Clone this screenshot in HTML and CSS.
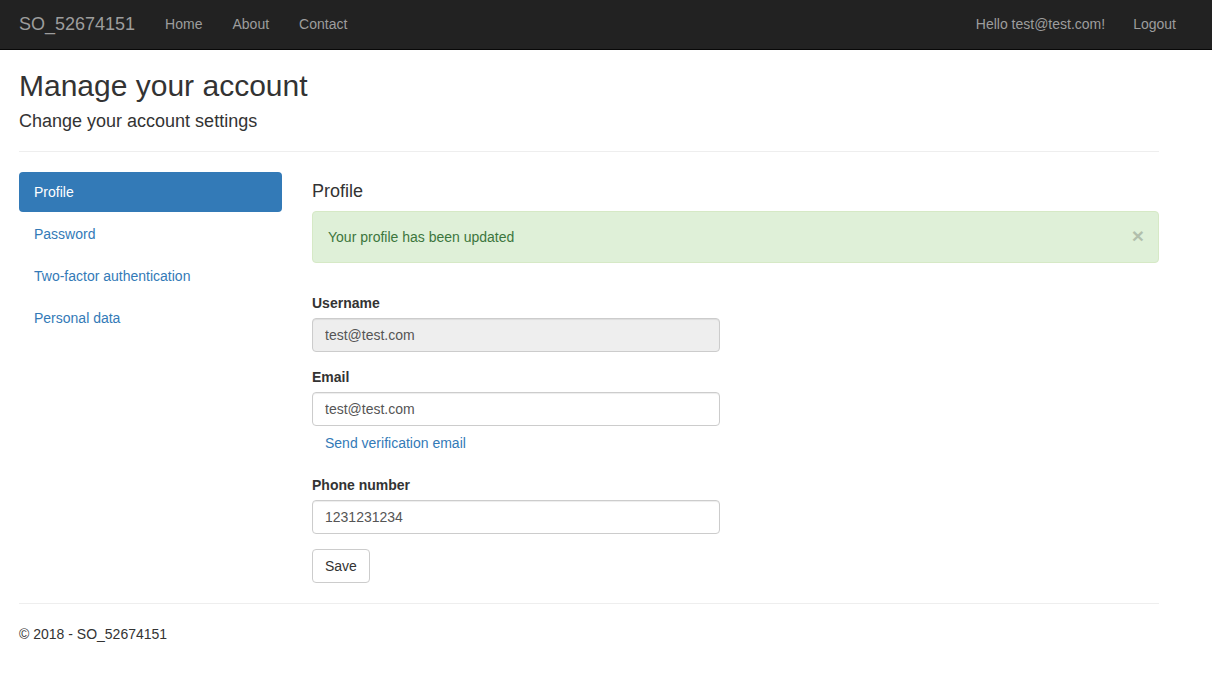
FILE: index.html
```html
<!DOCTYPE html>
<html>
<head>
<meta charset="utf-8">
<title>Profile - SO_52674151</title>
<link rel="stylesheet" href="styles.css">
</head>
<body>
<nav class="navbar">
  <div class="navbar-inner">
    <a class="brand" href="#">SO_52674151</a>
    <ul class="nav-links">
      <li><a href="#">Home</a></li>
      <li><a href="#">About</a></li>
      <li><a href="#">Contact</a></li>
    </ul>
    <div class="nav-right">
      <a class="nav-hello" href="#">Hello test@test.com!</a>
      <button class="nav-logout" type="button">Logout</button>
    </div>
  </div>
</nav>
<div class="container">
  <h2 class="title">Manage your account</h2>
  <h4 class="subtitle">Change your account settings</h4>
  <hr class="rule">
  <div class="row">
    <div class="side">
      <ul class="pills">
        <li class="active"><a href="#">Profile</a></li>
        <li><a href="#">Password</a></li>
        <li><a href="#">Two-factor authentication</a></li>
        <li><a href="#">Personal data</a></li>
      </ul>
    </div>
    <div class="main">
      <h4 class="section-title">Profile</h4>
      <div class="alert">
        <span class="close">&times;</span>
        Your profile has been updated
      </div>
      <form class="form">
        <div class="form-group">
          <label class="label">Username</label>
          <input class="input" type="text" value="test@test.com" disabled>
        </div>
        <div class="form-group">
          <label class="label">Email</label>
          <input class="input" type="text" value="test@test.com">
          <button type="button" class="btn-link">Send verification email</button>
        </div>
        <div class="form-group">
          <label class="label">Phone number</label>
          <input class="input" type="text" value="1231231234">
        </div>
        <button type="button" class="btn">Save</button>
      </form>
    </div>
  </div>
  <hr class="rule footer-rule">
  <footer class="footer">
    <p>&copy; 2018 - SO_52674151</p>
  </footer>
</div>
</body>
</html>
```
FILE: styles.css
```css
* { box-sizing: border-box; }
html, body { margin: 0; padding: 0; }
body {
  font-family: "Liberation Sans", Arial, Helvetica, sans-serif;
  font-size: 14px;
  line-height: 1.42857143;
  color: #333;
  background: #fff;
}
a { color: #337ab7; text-decoration: none; }

.navbar {
  background: #222;
  border-bottom: 1px solid #080808;
  height: 50px;
}
.navbar-inner {
  display: flex;
  align-items: center;
  height: 49px;
  padding: 0 24px 0 4px;
}
.brand {
  color: #9d9d9d;
  font-size: 18px;
  line-height: 20px;
  padding: 14px 15px 16px;
}
.nav-links {
  list-style: none;
  margin: 0;
  padding: 0;
  display: flex;
}
.nav-links a {
  display: block;
  color: #9d9d9d;
  padding: 14px 15px 16px;
  line-height: 20px;
}
.nav-right {
  margin-left: auto;
  display: flex;
  align-items: center;
}
.nav-hello {
  color: #9d9d9d;
  padding: 14px 16px 16px 15px;
  line-height: 20px;
}
.nav-logout {
  background: none;
  border: 0;
  color: #9d9d9d;
  font: inherit;
  font-size: 14px;
  line-height: 20px;
  padding: 5px 12px 7px;
}

.container {
  width: 1140px;
  margin-left: 19px;
}
.title {
  font-size: 30px;
  font-weight: 500;
  line-height: 1.1;
  margin: 19px 0 10px;
}
.subtitle {
  font-size: 18px;
  font-weight: 500;
  line-height: 1.1;
  margin: 10px 0 0;
}
.rule {
  border: 0;
  border-top: 1px solid #eee;
  margin: 19px 0 20px;
  height: 0;
}
.row {
  display: flex;
  gap: 30px;
}
.side { width: 263px; flex: none; }
.main { flex: 1; }
.pills {
  list-style: none;
  margin: 0;
  padding: 0;
}
.pills li + li { margin-top: 2px; }
.pills a {
  display: block;
  padding: 10px 15px;
  line-height: 20px;
  border-radius: 4px;
}
.pills .active a {
  background: #337ab7;
  color: #fff;
}
.section-title {
  font-size: 18px;
  font-weight: 500;
  line-height: 1.1;
  margin: 10px 0 9px;
}
.alert {
  background: #dff0d8;
  border: 1px solid #d6e9c6;
  color: #3c763d;
  border-radius: 4px;
  padding: 15px 35px 15px 15px;
  line-height: 20px;
  margin: 0 0 30px;
  position: relative;
}
.close {
  float: right;
  position: relative;
  right: -21px;
  top: -2px;
  font-size: 21px;
  font-weight: bold;
  line-height: 1;
  color: #000;
  opacity: 0.2;
}
.form { width: 408px; }
.form-group { margin-bottom: 15px; }
.label {
  display: block;
  font-weight: bold;
  margin-bottom: 5px;
  line-height: 20px;
}
.input {
  display: block;
  width: 100%;
  height: 34px;
  padding: 6px 12px;
  font: inherit;
  font-size: 14px;
  color: #555;
  background: #fff;
  border: 1px solid #ccc;
  border-radius: 4px;
  box-shadow: inset 0 1px 1px rgba(0,0,0,.075);
}
.input:disabled { background: #eee; }
.btn-link {
  display: inline-block;
  background: none;
  border: 1px solid transparent;
  color: #337ab7;
  font: inherit;
  font-size: 14px;
  line-height: 20px;
  padding: 6px 12px;
}
.btn {
  display: inline-block;
  background: #fff;
  border: 1px solid #ccc;
  border-radius: 4px;
  color: #333;
  font: inherit;
  font-size: 14px;
  line-height: 20px;
  padding: 6px 12px;
}
.footer-rule { margin: 20px 0 20px; }
.footer p { margin: 0 0 10px; }
```
